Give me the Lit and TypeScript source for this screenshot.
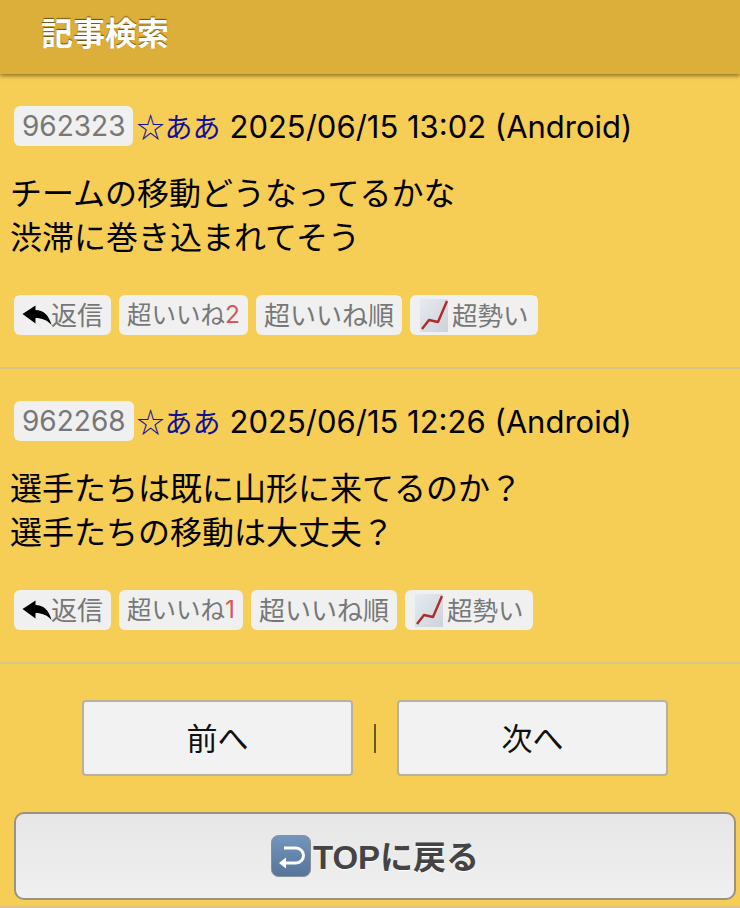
import { LitElement, html, css, svg } from "lit";
import { customElement } from "lit/decorators.js";

const replyIcon = svg`<svg class="ic-reply" viewBox="0 0 30 20" width="30" height="20"><path d="M0.5 9 L13.5 0.5 L13.5 5 C21 5 27 10 29.5 20 C25 15 20 13 13.5 13 L13.5 18.5 Z" fill="#000"/></svg>`;

const chartIcon = svg`<svg class="ic-chart" viewBox="0 0 28 33" width="28" height="33">
  <defs><linearGradient id="cg" x1="0" y1="0" x2="1" y2="1"><stop offset="0" stop-color="#e6eaf0"/><stop offset="1" stop-color="#ccd3db"/></linearGradient></defs>
  <rect width="28" height="33" fill="url(#cg)"/>
  <path d="M2 30 L9 21 L18 23 L27 2" fill="none" stroke="#b02a2a" stroke-width="2.4" stroke-linejoin="round"/>
</svg>`;

const returnIcon = svg`<svg viewBox="0 0 40 42" width="40" height="42">
  <defs><linearGradient id="rb" x1="0" y1="0" x2="0" y2="1"><stop offset="0" stop-color="#7596bc"/><stop offset="1" stop-color="#54749a"/></linearGradient></defs>
  <rect x="0.5" y="0.5" width="39" height="41" rx="7" fill="url(#rb)" stroke="#8a8f96"/>
  <path d="M13 13 H25 A7.5 7.5 0 0 1 25 28 H14" fill="none" stroke="#fff" stroke-width="3"/>
  <path d="M8 28 L15 22.5 V33.5 Z" fill="#fff"/>
</svg>`;

interface Post {
  no: string;
  date: string;
  lines: string[];
  likes: string;
}

const POSTS: Post[] = [
  {
    no: "962323",
    date: "2025/06/15 13:02 (Android)",
    lines: ["チームの移動どうなってるかな", "渋滞に巻き込まれてそう"],
    likes: "2",
  },
  {
    no: "962268",
    date: "2025/06/15 12:26 (Android)",
    lines: ["選手たちは既に山形に来てるのか？", "選手たちの移動は大丈夫？"],
    likes: "1",
  },
];

@customElement("app-root")
class AppRoot extends LitElement {
  static styles = css`
    :host {
      display: block;
      width: 740px;
      height: 908px;
      overflow: hidden;
      background: #f6cd55;
      font-family: "Liberation Sans", "Noto Sans CJK JP", sans-serif;
      color: #000;
    }

    header {
      height: 74px;
      box-sizing: border-box;
      padding: 12px 0 0 41px;
      background: #dcae3a;
      box-shadow: 0 2px 4px rgba(60, 45, 0, 0.55);
      color: #fff;
      font-size: 32px;
      line-height: 44px;
      font-weight: bold;
      text-shadow: 0 -1px 1px rgba(60, 40, 0, 0.7);
    }

    .post {
      height: 295px;
      box-sizing: border-box;
      padding: 32px 0 0 14px;
      border-bottom: 2px solid #d9c485;
    }

    .meta {
      display: flex;
      align-items: center;
      height: 40px;
      font-family: Inter, "Noto Sans CJK JP", sans-serif;
      font-size: 31px;
      white-space: nowrap;
    }

    .no {
      display: block;
      padding: 0 8px;
      height: 40px;
      line-height: 40px;
      background: #f0f0f0;
      border-radius: 6px;
      color: #777;
      font-size: 28px;
    }

    .name {
      margin-left: 3px;
      color: #10109a;
      font-family: "Liberation Sans", "Noto Sans CJK JP", sans-serif;
      font-size: 28px;
    }

    .date {
      margin-left: 9px;
    }

    .body {
      margin: 26px 0 0 -4px;
      font-size: 32px;
      line-height: 44px;
    }

    .actions {
      display: flex;
      gap: 8px;
      margin-top: 35px;
    }

    .act {
      display: flex;
      align-items: center;
      height: 40px;
      box-sizing: border-box;
      padding: 0 8px 3px;
      background: #f0f0f0;
      border-radius: 6px;
      color: #777;
      font-size: 26px;
      white-space: nowrap;
    }

    .act.like {
      font-size: 24.5px;
    }

    .act.trend {
      padding-left: 10px;
      padding-right: 9px;
      padding-bottom: 0;
      font-size: 25.5px;
    }

    .act.trend span {
      margin-bottom: 3px;
    }

    .act .count {
      color: #d9555a;
      font-family: Inter, sans-serif;
    }

    .ic-reply {
      margin-right: -1px;
      margin-top: 3px;
    }

    .ic-chart {
      margin-right: 4px;
    }

    .pager {
      display: flex;
      align-items: center;
      justify-content: center;
      gap: 21px;
      margin-top: 36px;
      padding-left: 10px;
    }

    .pager .btn {
      width: 271px;
      height: 76px;
      box-sizing: border-box;
      display: flex;
      align-items: center;
      justify-content: center;
      padding-bottom: 4px;
      background: #f2f2f2;
      border: 2px solid #b7b2a0;
      border-radius: 4px;
      font-size: 31px;
      color: #111;
    }

    .pager .sep {
      width: 2px;
      height: 29px;
      background: #6b5a20;
    }

    .top {
      display: flex;
      align-items: center;
      justify-content: center;
      gap: 2px;
      margin: 36px 0 0 14px;
      width: 722px;
      height: 88px;
      box-sizing: border-box;
      background: linear-gradient(#e6e6e6, #f0f0f0);
      border: 2px solid #999384;
      border-radius: 10px;
      font-size: 33px;
      font-weight: bold;
      color: #444;
      text-shadow: 0 1px 1px #fff;
    }

    .top span {
      margin-bottom: 3px;
    }

    .foot {
      height: 2px;
      margin-top: 6px;
      background: #d9c485;
    }
  `;

  private renderPost(p: Post) {
    return html`
      <section class="post">
        <div class="meta">
          <span class="no">${p.no}</span>
          <span class="name">☆ああ</span>
          <span class="date">${p.date}</span>
        </div>
        <div class="body">${p.lines.map((l) => html`<div>${l}</div>`)}</div>
        <div class="actions">
          <span class="act">${replyIcon}返信</span>
          <span class="act like">超いいね<span class="count">${p.likes}</span></span>
          <span class="act">超いいね順</span>
          <span class="act trend">${chartIcon}<span>超勢い</span></span>
        </div>
      </section>
    `;
  }

  render() {
    return html`
      <header>記事検索</header>
      ${POSTS.map((p) => this.renderPost(p))}
      <nav class="pager">
        <span class="btn">前へ</span>
        <span class="sep"></span>
        <span class="btn">次へ</span>
      </nav>
      <div class="top">${returnIcon}<span>TOPに戻る</span></div>
      <div class="foot"></div>
    `;
  }
}
